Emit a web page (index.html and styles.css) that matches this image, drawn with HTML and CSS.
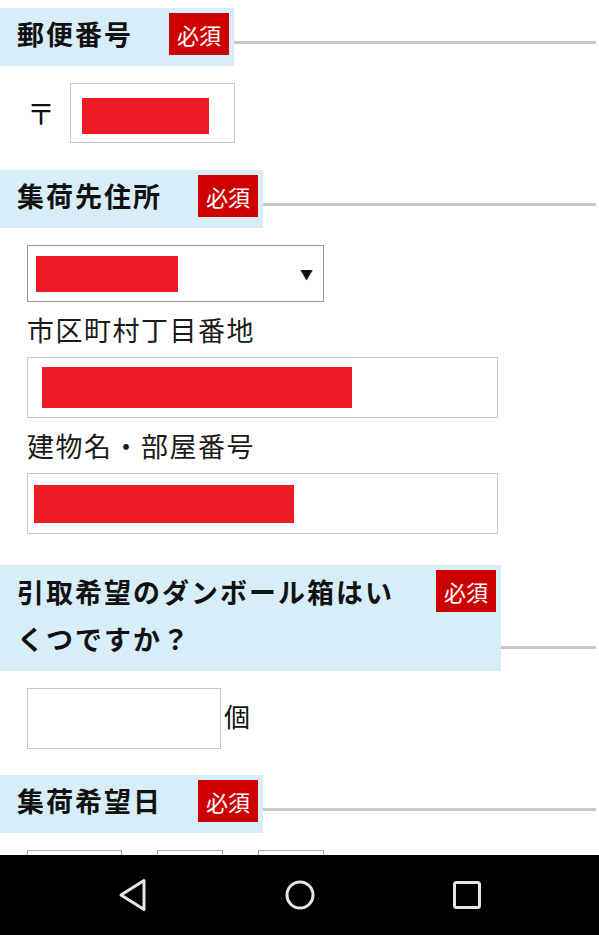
FILE: index.html
```html
<!DOCTYPE html>
<html lang="ja">
<head>
    <meta charset="UTF-8">
    <meta name="viewport" content="width=device-width, initial-scale=1.0">
    <title>集荷申し込み</title>
    <link rel="stylesheet" href="styles.css">
</head>
<body>
    <form class="pickup-form">
        <section class="sec">
            <div class="sec-head">
                <div class="sec-label">
                    <h2>郵便番号</h2>
                    <span class="req">必須</span>
                </div>
                <div class="sec-rule"></div>
            </div>
            <div class="sec-body postal">
                <span class="postal-mark">〒</span>
                <div class="field field-zip"><span class="redact"></span></div>
            </div>
        </section>

        <section class="sec">
            <div class="sec-head">
                <div class="sec-label">
                    <h2>集荷先住所</h2>
                    <span class="req">必須</span>
                </div>
                <div class="sec-rule"></div>
            </div>
            <div class="sec-body addr">
                <div class="select-box"><span class="redact"></span><span class="arrow">▼</span></div>
                <label class="field-label">市区町村丁目番地</label>
                <div class="field field-wide field-street"><span class="redact"></span></div>
                <label class="field-label">建物名・部屋番号</label>
                <div class="field field-wide field-room"><span class="redact"></span></div>
            </div>
        </section>

        <section class="sec">
            <div class="sec-head">
                <div class="sec-label wide">
                    <h2>引取希望のダンボール箱はいくつですか？</h2>
                    <span class="req">必須</span>
                </div>
                <div class="sec-rule"></div>
            </div>
            <div class="sec-body count">
                <div class="field field-count"></div>
                <span class="unit">個</span>
            </div>
        </section>

        <section class="sec">
            <div class="sec-head">
                <div class="sec-label">
                    <h2>集荷希望日</h2>
                    <span class="req">必須</span>
                </div>
                <div class="sec-rule"></div>
            </div>
            <div class="sec-body date">
                <div class="date-box year"></div>
                <div class="date-box"></div>
                <div class="date-box"></div>
            </div>
        </section>
    </form>

    <!-- android system navigation -->
    <nav class="nav-bar">
        <div class="nav-btn">
            <svg width="32" height="34" viewBox="0 0 32 34"><path d="M27 2.5 L4 17 L27 31.5 Z" fill="none" stroke="#e6e6e6" stroke-width="3" stroke-linejoin="round"/></svg>
        </div>
        <div class="nav-btn">
            <svg width="32" height="32" viewBox="0 0 32 32"><circle cx="16" cy="16" r="13" fill="none" stroke="#e6e6e6" stroke-width="3"/></svg>
        </div>
        <div class="nav-btn">
            <svg width="30" height="30" viewBox="0 0 30 30"><rect x="2.5" y="2.5" width="25" height="25" rx="2" fill="none" stroke="#e6e6e6" stroke-width="3"/></svg>
        </div>
    </nav>
</body>
</html>
```

FILE: styles.css
```css
body {
    margin: 0;
    font-family: "Noto Sans CJK JP", "Noto Sans", sans-serif;
    color: #111;
    background: #fff;
}
.pickup-form {
    padding-top: 8px;
}
.sec-head {
    display: flex;
    align-items: flex-end;
}
.sec-label {
    display: flex;
    align-items: flex-start;
    background: #d7eef8;
    padding: 3px 5px 9px 17px;
}
.sec-label.wide {
    width: 501px;
    box-sizing: border-box;
}
.sec-label h2 {
    margin: 0;
    font-size: 27px;
    line-height: 46px;
    letter-spacing: 2px;
    font-weight: bold;
}
.sec-label.wide h2 {
    flex: 1;
    line-height: 47px;
}
.req {
    margin: 2px 0 0 36px;
    width: 60px;
    height: 42px;
    line-height: 42px;
    background: #cc0000;
    color: #fff;
    font-size: 22px;
    text-align: center;
    flex-shrink: 0;
}
.sec-rule {
    flex: 1;
    height: 3px;
    background: #c8c8c8;
    margin: 0 3px 22px 0;
}
.sec-body {
    padding: 17px 0 27px 27px;
}
.sec-body.addr {
    padding-bottom: 31px;
}
.sec-body.count {
    padding-bottom: 26px;
}
.field {
    box-sizing: border-box;
    border: 1px solid #c8c8c8;
    background: #fff;
}
.redact {
    display: block;
    background: #ed1c24;
}
.postal {
    display: flex;
    align-items: center;
    padding-left: 27px;
}
.postal-mark {
    font-size: 28px;
    margin-right: 15px;
}
.field-zip {
    width: 165px;
    height: 60px;
    padding: 14px 0 0 11px;
}
.field-zip .redact {
    width: 127px;
    height: 36px;
}
.select-box {
    box-sizing: border-box;
    width: 297px;
    height: 57px;
    border: 1px solid #9a9a9a;
    display: flex;
    align-items: center;
    padding: 0 10px 0 8px;
}
.select-box .redact {
    width: 142px;
    height: 36px;
}
.arrow {
    margin-left: auto;
    font-size: 13px;
}
.field-label {
    display: block;
    font-size: 27px;
    line-height: 55px;
    letter-spacing: 1.5px;
    color: #1a1a1a;
}
.field-wide {
    width: 471px;
    height: 61px;
}
.field-street {
    padding: 9px 0 0 14px;
}
.field-street .redact {
    width: 310px;
    height: 41px;
}
.field-room {
    padding: 11px 0 0 6px;
}
.field-room .redact {
    width: 260px;
    height: 38px;
}
.count {
    display: flex;
    align-items: center;
}
.field-count {
    width: 194px;
    height: 61px;
}
.unit {
    font-size: 26px;
    margin-left: 3px;
    margin-top: -6px;
}
.date {
    display: flex;
    gap: 35px;
}
.date-box {
    box-sizing: border-box;
    width: 66px;
    height: 50px;
    border: 1px solid #a8a8a8;
}
.date-box.year {
    width: 95px;
}
.nav-bar {
    position: fixed;
    left: 0;
    right: 0;
    bottom: 0;
    height: 80px;
    background: #000;
    display: flex;
    justify-content: center;
    align-items: center;
}
.nav-btn {
    width: 167px;
    display: flex;
    justify-content: center;
}
```
